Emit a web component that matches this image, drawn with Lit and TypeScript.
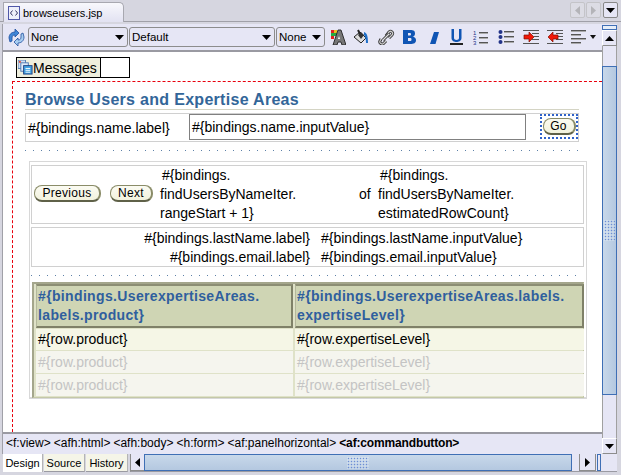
import { LitElement, html, css, svg } from "lit";
import { customElement } from "lit/decorators.js";

const arrowDown = html`<svg class="ar" width="9" height="5" viewBox="0 0 9 5"><path d="M0 0h9L4.500 5z" fill="#000"/></svg>`;

@customElement("app-root")
export class AppRoot extends LitElement {
  static styles = css`
    :host { display: block; width: 621px; height: 475px; overflow: hidden; font-family: "Liberation Sans", Arial, sans-serif; font-size: 14px; color: #000; }
    * { box-sizing: border-box; }
    .root { width: 621px; height: 475px; background: #d6d6e0; display: flex; flex-direction: column; padding-bottom: 3px; }
    .strip { height: 22px; flex: none; display: flex; align-items: flex-start; padding: 2px 3px 0 3px; border-bottom: 1px solid #a0a0a8; justify-content: space-between; }
    .tab { width: 121px; height: 20px; background: linear-gradient(#f8f8fc, #e2e2f2); border: 1px solid #a8a8b0; border-bottom: none; border-top-right-radius: 5px; display: flex; align-items: center; gap: 3px; padding-left: 4px; font-size: 11px; }
    .wbtns { display: flex; gap: 1px; }
    .wb { width: 15px; height: 16px; border: 1px solid #c4c4c8; border-radius: 2px; background: #dcdce4; display: flex; align-items: center; justify-content: center; }
    .wb.on { border-color: #888; background: #e6e6f5; margin-left: 1px; }
    .main { flex: 1; display: flex; min-height: 0; padding: 2px 0 0 2px; }
    .ed { width: 600px; display: flex; flex-direction: column; border-left: 1px solid #a0a0a8; }
    .tb { height: 28px; flex: none; background: #e6e6f5; border-bottom: 2px solid #9a9aa2; display: flex; align-items: center; padding: 0 0 0 5px; }
    .sel { height: 20px; background: #e6e6f5; border: 1px solid #8c8c8c; border-radius: 3px; display: flex; align-items: center; justify-content: space-between; padding: 0 3px 0 2px; font-size: 11.5px; margin-right: 1px; }
    .ic { display: block; flex: none; }
    .tbi { display: flex; align-items: center; }
    .canvas { flex: 1; background: #fff; display: flex; flex-direction: column; min-height: 0; padding: 5px 0 0 0; }
    .msg { margin-left: 13px; width: 114px; height: 21px; border: 1px solid #000; display: flex; flex: none; }
    .msg .l { width: 84px; background: #eeeedd; border-right: 1px solid #000; display: flex; align-items: center; font-size: 14px; padding-left: 1px; white-space: nowrap; }
    .design { flex: 1; margin: 3px 0 0 9px; border-top: 1px dashed #e8000c; border-left: 1px dashed #e8000c; padding: 9px 0 0 12px; min-height: 0; }
    h1 { margin: 0; width: 554px; height: 19px; font-size: 16px; line-height: 18px; font-weight: bold; color: #336699; border-bottom: 1px solid #d4d4c4; white-space: nowrap; letter-spacing: 0.3px; }
    .search { margin-top: 3px; width: 554px; height: 29px; border: 1px solid #d0d0d0; display: flex; align-items: center; padding-left: 2px; white-space: nowrap; }
    .search .lb { width: 161px; margin-top: 1px; }
    .input { width: 337px; height: 26px; margin-top: -2px; border: 1px solid #808080; display: flex; align-items: center; padding-left: 2px; }
    .focus { margin-left: 14px; margin-top: -3px; width: 38px; height: 25px; border: 2px dotted #2f62c8; display: flex; align-items: center; justify-content: center; }
    .btn { border: 1px solid #8a8c68; border-bottom: 2px solid #5f6148; border-right-width: 2px; border-radius: 8px; background: linear-gradient(#fbfbf2, #f2f2dd); height: 17px; display: flex; align-items: center; justify-content: center; font-size: 12px; letter-spacing: 0.3px; }
    .dots { height: 1px; background-image: repeating-linear-gradient(90deg, #5c80a8 0 1px, transparent 1px 8px); }
    .d1 { margin-top: 8px; width: 554px; }
    .outer { margin: 10px 0 0 4px; width: 558px; height: 238px; border: 1px solid #d8d8d8; border-bottom-width: 2px; padding: 3px 2px 0 1px; }
    .r1 { height: 59px; border: 1px solid #d0d0d0; display: flex; align-items: center; line-height: 19px; white-space: nowrap; }
    .r1 .btn { margin-top: -2px; }
    .r2 { margin-top: 3px; height: 40px; border: 1px solid #d0d0d0; display: grid; grid-template-columns: 278px 1fr; column-gap: 11px; line-height: 19px; padding-top: 1px; white-space: nowrap; }
    .r2 .a { text-align: right; }
    .d2 { margin: 8px 0 0 0; width: 548px; }
    .tbl { margin: 6px 0 0 1px; width: 552px; height: 116px; background: #dfe2c8; border: 1px solid #c4c8a8; border-top: 2px solid #a4a68c; border-left: 2px solid #a4a68c; padding: 0 0 1px 2px; display: grid; grid-template-columns: 257px 289px; grid-template-rows: 44px 21px 22px 22px; gap: 1px 2px; }
    .th { background: #cfd5b4; border: 2px solid #7f8168; border-top-color: #8c8e74; border-left: 1px solid #b4b89c; font-weight: bold; color: #2f5f9e; line-height: 19px; padding: 1px 0 0 1px; letter-spacing: 0.35px; font-size: 14px; white-space: nowrap; overflow: hidden; }
    .td { background: #f5f6e6; display: flex; align-items: center; padding: 0 0 1px 2px; white-space: nowrap; }
    .td.off { background: #f5f5ee; color: #c4c4c4; }
    .crumb { height: 22px; flex: none; background: #e6e6f5; border-top: 2px solid #9a9aa2; font-size: 12px; display: flex; align-items: center; padding: 0 0 2px 3px; white-space: nowrap; gap: 3px; }
    .crumb b { font-size: 12px; letter-spacing: -0.15px; }
    .vs { width: 15px; display: flex; flex-direction: column; background: #e6e6f5; flex: none; }
    .vs .cap { height: 5px; margin-top: 1px; border: 1px solid #3f6fb5; background: #e6eef8; flex: none; }
    .vbtn { height: 16px; flex: none; border: 1px solid #8c8c8c; border-top-color: #fff; border-left-color: #fff; background: #e6e6f5; display: flex; align-items: center; justify-content: center; }
    .vs .track1 { height: 20px; flex: none; border-left: 1px solid #a0a0a0; border-right: 1px solid #a0a0a0; }
    .vthumb { height: 329px; flex: none; border: 1px solid #3f6fb5; background: linear-gradient(90deg, #c8d8ea, #b4c8e0); display: flex; align-items: center; justify-content: center; }
    .grip { width: 11px; height: 21px; background-image: radial-gradient(circle, #6c8cd8 0.7px, transparent 0.8px), radial-gradient(circle, #fff 0.7px, transparent 0.8px); background-size: 3px 3px; background-position: 0 0, 1.5px 1.5px; }
    .vs .track2 { flex: 1; border-left: 1px solid #a0a0a0; border-right: 1px solid #a0a0a0; }
    .bot { height: 18px; flex: none; display: flex; padding: 0 4px 0 3px; }
    .bt { height: 18px; background: #f5f5e8; border-right: 1px solid #b4b4b4; border-bottom: 1px solid #9a9aa2; font-size: 11px; display: flex; align-items: center; justify-content: center; margin-right: 1px; }
    .bt.on { background: #fff; border-bottom: none; }
    .hs { flex: 1; display: flex; height: 18px; margin-left: 1px; background: #e6e6f5; border-bottom: 1px solid #9a9aa2; border-left: 1px solid #8c8c8c; }
    .hbtn { width: 13px; flex: none; display: flex; align-items: center; justify-content: center; border-bottom: 1px solid #8c8c8c; }
    .hthumb { width: 428px; flex: none; border: 1px solid #3f6fb5; background: linear-gradient(#c8d8ea, #b4c8e0); display: flex; align-items: center; justify-content: center; }
    .hgrip { width: 22px; height: 12px; background-image: radial-gradient(circle, #6c8cd8 0.7px, transparent 0.8px), radial-gradient(circle, #fff 0.7px, transparent 0.8px); background-size: 3px 3px; background-position: 0 0, 1.5px 1.5px; }
    .htrack { width: 7px; flex: none; }
    .hcap { width: 4px; flex: none; border: 1px solid #3f6fb5; margin-left: 1px; }
    .hr { width: 17px; border-left: 1px solid #8c8c8c; border-right: 1px solid #8c8c8c; }
    .sp { flex: 1; }
  `;

  private icon(c: any, w = 16, h = 16, dw = w, dh = h) {
    return html`<svg class="ic" width=${dw} height=${dh} viewBox="0 0 ${w} ${h}">${c}</svg>`;
  }

  private toolbar() {
    const bar = (x: number, y: number, w: number, col = "#555") => svg`<rect x=${x} y=${y} width=${w} height="1" fill=${col}/>`;
    return html`
      <div class="tbi" style="width:20px">${this.icon(svg`
        <path d="M1 9C1 5 4 3 7 3V0l4 4-4 4V6C5 6 4 7 4 9v3L2 13z" fill="#3f86d6" stroke="#1f4f9e" stroke-width=".8"/>
        <path d="M16 8c0 4-3 6-6 6v3l-4-4 4-4v2c2 0 3-1 3-3V5l2-1z" fill="#a8cdf0" stroke="#1f4f9e" stroke-width=".8"/>`, 17, 17)}</div>
      <div class="sel" style="width:100px"><span>None</span>${arrowDown}</div>
      <div class="sel" style="width:146px"><span>Default</span>${arrowDown}</div>
      <div class="sel" style="width:49px;margin-right:4px"><span>None</span>${arrowDown}</div>
      <div class="tbi" style="width:22px;margin-left:1px">${this.icon(svg`
        <rect x="1" y="1" width="3" height="3" fill="#e02020"/><rect x="4" y="1" width="3" height="3" fill="#e8c020"/>
        <rect x="1" y="4" width="3" height="3" fill="#20b040"/><rect x="4" y="4" width="3" height="3" fill="#30a040"/>
        <rect x="1" y="7" width="3" height="3" fill="#e02020"/>
        <path d="M8 1h3l5 15h-4l-1-3H8l-1 3H3z" fill="#777" stroke="#222" stroke-width=".9"/><path d="M9 7l-1 3h2z" fill="#fff"/>`)}</div>
      <div class="tbi" style="width:25px;padding-left:1px">${this.icon(svg`
        <path d="M1 8l6-5 6 6-5 5z" fill="#ddd" stroke="#222"/><path d="M5 1l3 6" stroke="#222" stroke-width="2"/>
        <path d="M5 6l3-3 3 3-3 4z" fill="#333"/><path d="M11 3c3 1 4 4 4 11h-2c0-4-1-7-2-8z" fill="#1f6fc8"/>`, 17)}</div>
      <div class="tbi" style="width:24px;padding-left:1px">${this.icon(svg`
        <path d="M3 10l-1 2c-1 2 2 4 3.500 2.500L8 12" fill="none" stroke="#333" stroke-width="3"/>
        <path d="M3 10l-1 2c-1 2 2 4 3.500 2.500L8 12" fill="none" stroke="#ccc" stroke-width="1.200"/>
        <path d="M8 7l3-4c2-2 5 1 3 3l-3 3" fill="none" stroke="#333" stroke-width="3"/>
        <path d="M8 7l3-4c2-2 5 1 3 3l-3 3" fill="none" stroke="#ccc" stroke-width="1.200"/>
        <path d="M5 11l6-6" stroke="#333" stroke-width="3"/><path d="M5 11l6-6" stroke="#ddd" stroke-width="1.200"/>`, 17)}</div>
      <div class="tbi" style="width:22px;padding-left:1px">${this.icon(svg`
        <path d="M1 1h7c4 0 5 1 5 3.500 0 2-1 3-2.500 3.200C12.500 8 14 9 14 11c0 3-2 4-6 4H1zM6 4v2.500h1.500c1 0 1.500-.3 1.500-1.300S8.500 4 7.500 4zM6 9v3h2c1 0 1.500-.3 1.500-1.500S9 9 8 9z" fill="#0f55b4"/>`, 15)}</div>
      <div class="tbi" style="width:24px;padding-left:6px">${this.icon(svg`<path d="M5 3h5l-3.500 12H1z" fill="#0f55b4"/>`, 11)}</div>
      <div class="tbi" style="width:24px;padding-left:3px">${this.icon(svg`
        <path d="M1.500 0v9c0 3 3 4 5 4s5-1 5-4V0H9v9c0 1-1 2-2.500 2S4 10 4 9V0z" fill="#0f55b4"/><rect x="0" y="14" width="13" height="2" fill="#222"/>`, 13)}</div>
      <div class="tbi" style="width:25px;padding-left:2px">${this.icon(svg`
        <text x="0" y="6" font-size="6" fill="#223388" font-family="Liberation Sans">1</text><text x="0" y="11" font-size="6" fill="#223388" font-family="Liberation Sans">2</text><text x="0" y="16" font-size="6" fill="#223388" font-family="Liberation Sans">3</text>
        ${bar(6, 3, 9)}${bar(6, 4, 9, "#aaa")}${bar(6, 8, 9)}${bar(6, 9, 9, "#aaa")}${bar(6, 13, 9)}${bar(6, 14, 9, "#aaa")}`)}</div>
      <div class="tbi" style="width:24px;padding-left:2px">${this.icon(svg`
        <circle cx="2.500" cy="3" r="2" fill="#223388"/><circle cx="2.500" cy="8" r="2" fill="#223388"/><circle cx="2.500" cy="13" r="2" fill="#223388"/>
        ${bar(6, 2, 10)}${bar(6, 3, 10, "#aaa")}${bar(6, 7, 10)}${bar(6, 8, 10, "#aaa")}${bar(6, 12, 10)}${bar(6, 13, 10, "#aaa")}`)}</div>
      <div class="tbi" style="width:24px;padding-left:3px">${this.icon(svg`
        ${bar(0, 1, 16)}${bar(9, 4, 7)}${bar(11, 7, 5)}${bar(9, 10, 7)}${bar(0, 14, 16)}
        <path d="M1 6h5V3l5 5-5 5v-3H1z" fill="#f01808" stroke="#801000" stroke-width=".7"/>`, 16)}</div>
      <div class="tbi" style="width:24px;padding-left:3px">${this.icon(svg`
        ${bar(0, 1, 16)}${bar(9, 4, 7)}${bar(11, 7, 5)}${bar(9, 10, 7)}${bar(0, 14, 16)}
        <path d="M11 6H6V3L1 8l5 5v-3h5z" fill="#f01808" stroke="#801000" stroke-width=".7"/>`, 16)}</div>
      <div class="tbi" style="padding-left:3px;gap:3px">${this.icon(svg`
        ${bar(0, 1, 15)}${bar(0, 2, 15, "#aaa")}${bar(0, 5, 10)}${bar(0, 6, 10, "#aaa")}${bar(0, 9, 15)}${bar(0, 10, 15, "#aaa")}${bar(0, 13, 10)}${bar(0, 14, 10, "#aaa")}`)}
        <svg width="6" height="4" viewBox="0 0 6 4"><path d="M0 0h6L3 4z" fill="#111"/></svg></div>`;
  }

  render() {
    return html`<div class="root">
      <div class="strip">
        <div class="tab">${this.icon(svg`<rect x=".5" y=".5" width="11" height="13" fill="#eef0fa" stroke="#5058a8"/><path d="M4.500 4.500L2.500 7l2 2.500M7.500 4.500L9.500 7l-2 2.500" fill="none" stroke="#303060"/>`, 12, 14)}<span>browseusers.jsp</span></div>
        <div class="wbtns">
          <div class="wb"><svg width="5" height="9" viewBox="0 0 5 9"><path d="M5 0v9L0 4.500z" fill="#b4b4b8"/></svg></div>
          <div class="wb"><svg width="5" height="9" viewBox="0 0 5 9"><path d="M0 0v9l5-4.500z" fill="#b4b4b8"/></svg></div>
          <div class="wb on">${arrowDown}</div>
        </div>
      </div>
      <div class="main">
        <div class="ed">
          <div class="tb">${this.toolbar()}</div>
          <div class="canvas">
            <div class="msg"><div class="l">${this.icon(svg`
              <rect x="0" y="0" width="8" height="9" fill="#cfe0f4" stroke="#5078b0"/><rect x="3" y="3" width="8" height="9" fill="#dfeaf8" stroke="#5078b0"/>
              <rect x="1" y="1" width="2" height="2" fill="#e05040"/>
              <rect x="6" y="6" width="9" height="9" fill="#40a0e0" stroke="#204080"/><path d="M8 9h5M8 11h5M8 13h5" stroke="#fff"/>`, 16, 16, 15, 15)}<span>Messages</span></div></div>
            <div class="design">
              <h1>Browse Users and Expertise Areas</h1>
              <div class="search">
                <span class="lb">#{bindings.name.label}</span>
                <div class="input">#{bindings.name.inputValue}</div>
                <div class="focus"><div class="btn" style="width:33px">Go</div></div>
              </div>
              <div class="dots d1"></div>
              <div class="outer">
                <div class="r1">
                  <div class="btn" style="width:67px;margin-left:2px">Previous</div>
                  <div class="btn" style="width:43px;margin-left:9px">Next</div>
                  <div style="width:199px;margin-left:7px"><div style="padding-left:2px">#{bindings.</div>findUsersByNameIter.<br>rangeStart + 1}</div>
                  <div style="width:19px">of</div>
                  <div><div style="padding-left:2px">#{bindings.</div>findUsersByNameIter.<br>estimatedRowCount}</div>
                </div>
                <div class="r2">
                  <div class="a">#{bindings.lastName.label}</div><div>#{bindings.lastName.inputValue}</div>
                  <div class="a">#{bindings.email.label}</div><div>#{bindings.email.inputValue}</div>
                </div>
                <div class="dots d2"></div>
                <div class="tbl">
                  <div class="th">#{bindings.UserexpertiseAreas.<br>labels.product}</div>
                  <div class="th">#{bindings.UserexpertiseAreas.labels.<br>expertiseLevel}</div>
                  <div class="td">#{row.product}</div><div class="td">#{row.expertiseLevel}</div>
                  <div class="td off">#{row.product}</div><div class="td off">#{row.expertiseLevel}</div>
                  <div class="td off">#{row.product}</div><div class="td off">#{row.expertiseLevel}</div>
                </div>
              </div>
            </div>
          </div>
          <div class="crumb"><span>&lt;f:view&gt;</span><span>&lt;afh:html&gt;</span><span>&lt;afh:body&gt;</span><span>&lt;h:form&gt;</span><span>&lt;af:panelhorizontal&gt;</span><b>&lt;af:commandbutton&gt;</b></div>
        </div>
        <div class="vs">
          <div class="cap"></div>
          <div class="vbtn"><svg width="9" height="5" viewBox="0 0 9 5"><path d="M0 5h9L4.500 0z" fill="#000"/></svg></div>
          <div class="track1"></div>
          <div class="vthumb"><div class="grip"></div></div>
          <div class="track2"></div>
          <div class="vbtn">${arrowDown}</div>
        </div>
      </div>
      <div class="bot">
        <div class="bt on" style="width:40px">Design</div>
        <div class="bt" style="width:41px">Source</div>
        <div class="bt" style="width:42px">History</div>
        <div class="hs">
          <div class="hbtn"><svg width="5" height="9" viewBox="0 0 5 9"><path d="M5 0v9L0 4.500z" fill="#000"/></svg></div>
          <div class="hthumb"><div class="hgrip"></div></div>
          <div class="htrack"></div>
          <div class="hbtn hr"><svg width="5" height="9" viewBox="0 0 5 9"><path d="M0 0v9l5-4.500z" fill="#000"/></svg></div>
          <div class="hcap"></div>
          <div class="sp"></div>
        </div>
      </div>
    </div>`;
  }
}
